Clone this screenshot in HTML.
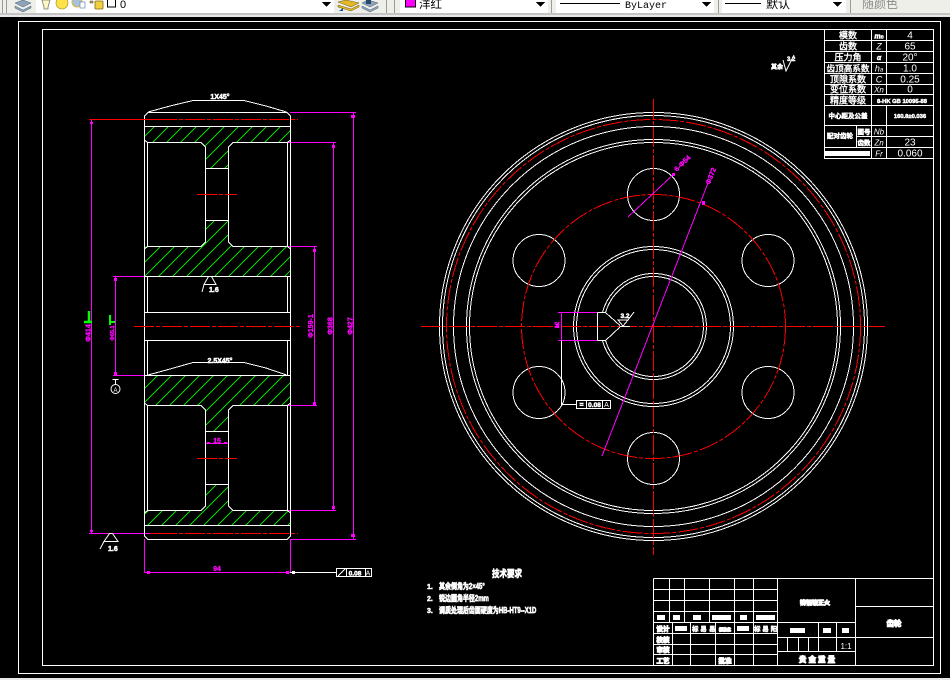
<!DOCTYPE html>
<html><head><meta charset="utf-8"><style>
html,body{margin:0;padding:0;background:#000;width:950px;height:680px;overflow:hidden}
svg{display:block}
text{font-family:"Liberation Sans","Noto Sans CJK SC",sans-serif;fill:#fff}
.w{fill:none;stroke:#fff;stroke-width:1}
.m{fill:none;stroke:#f0f;stroke-width:1}
.r{fill:none;stroke:#f00;stroke-width:1}
.d{stroke-dasharray:20 2 4 2}
.b{stroke:#fff;stroke-width:.5;font-weight:bold}
.bb{stroke:#fff;stroke-width:1;font-weight:bold}
.mt{fill:#f0f;stroke:#f0f;stroke-width:.3;font-size:7px;font-weight:bold}
.c{text-anchor:middle}
.tb{font-size:9px;stroke:#fff;stroke-width:.4}
</style></head><body>
<svg width="950" height="680" viewBox="0 0 950 680" xmlns="http://www.w3.org/2000/svg">
<rect width="950" height="680" fill="#000"/>
<!-- toolbar -->
<rect width="950" height="13" fill="#efefea"/>
<rect y="13" width="950" height="2" fill="#c4c4c4"/>
<rect y="15" width="950" height="2" fill="#e8e8e8"/>
<rect y="678" width="950" height="2" fill="#e8e8e8"/>
<g shape-rendering="crispEdges">
<path d="M2.500 0V13M6.500 0V13M386.500 0V13M394.500 0V13M551.500 0V13M718.500 0V13M850.500 0V13" stroke="#9a9a9a" fill="none"/>
<rect x="36" y="0" width="298" height="13" fill="#fff"/>
<rect x="400" y="0" width="148" height="13" fill="#fff"/>
<rect x="556" y="0" width="158" height="13" fill="#fff"/>
<rect x="722" y="0" width="124" height="13" fill="#fff"/>
<rect x="405.500" y="-1" width="10" height="8" fill="#f0f" stroke="#000"/>
<rect x="107.500" y="-1" width="8" height="8" fill="#fff" stroke="#000"/>
<path d="M560 3.500H620M725 3.500H761" stroke="#000"/>
<path d="M322 2h9l-4.500 5zM536 2h9l-4.500 5zM702 2h9l-4.500 5zM833 2h9l-4.500 5z" fill="#000"/>
</g>
<!-- toolbar icons -->
<path d="M15 3l8-3 8 3-8 4zM15 6l8 4 8-4v2l-8 4-8-4z" fill="#8fa3b8" stroke="#4d6178" stroke-width=".5"/>
<path d="M42 0h8l-2 7v2h-4v-2z" fill="#fff8c0" stroke="#777" stroke-width=".8"/>
<circle cx="62" cy="3" r="6" fill="#ffe24a" stroke="#9a8a20" stroke-width=".6"/>
<circle cx="77" cy="2" r="5" fill="#a8c0d8" stroke="#d8b840" stroke-width="1"/>
<rect x="80" y="2" width="5" height="6" fill="#fff" stroke="#6b8ab0" stroke-width=".7"/>
<rect x="95" y="1" width="8" height="8" rx="1" fill="#f0d040" stroke="#7d6a10" stroke-width=".8"/>
<path d="M90 1h3v2h-3z" fill="#d8b840" stroke="#333" stroke-width=".5"/>
<path d="M338 2l8-2 13 3-8 4zM338 5l13 4 8-4v2l-8 4-13-4z" fill="#e3b92a" stroke="#6a5a10" stroke-width=".5"/>
<path d="M339 11l4-3v3z" fill="#234a9c"/>
<path d="M362 3l6-3 10 3-8 4zM362 6l8 4 8-4v2l-8 4-8-4z" fill="#8fa3b8" stroke="#4d6178" stroke-width=".5"/>
<rect x="366" y="0" width="5" height="4" fill="#234a6c"/>
<text x="120" y="8" font-size="11" style="fill:#000">0</text>
<text x="419" y="8" font-size="11.500" style="fill:#000">洋红</text>
<text x="625" y="8" font-size="10" style="fill:#000;font-family:'Liberation Mono',monospace">ByLayer</text>
<text x="766" y="8" font-size="12" style="fill:#000">默认</text>
<text x="862" y="8" font-size="12" style="fill:#8c8c8c">随颜色</text>

<g shape-rendering="crispEdges">
<!-- frames -->
<rect x="18.500" y="21.500" width="922" height="652" class="w"/>
<rect x="42.500" y="29.500" width="891" height="636" class="w"/>

<!-- parameter table -->
<path class="w" d="M824.500 29.500V158.500H933.500M824.500 40.500H933.500M824.500 51.500H933.500M824.500 62.500H933.500M824.500 73.500H933.500M824.500 84.500H933.500M824.500 94.500H933.500M824.500 105.500H933.500M824.500 125.500H933.500M856.500 136.500H933.500M824.500 147.500H933.500M871.500 29.500V158.500M886.500 29.500V94.500M886.500 105.500V158.500M856.500 125.500V147.500"/>
<rect x="825" y="151" width="45" height="5" fill="#fff"/>

<!-- title block -->
<path class="w" d="M653.500 578.500H933.500M653.500 578.500V665.500M777.500 578.500V665.500M855.500 578.500V665.500M855.500 606.500H933.500M855.500 637.500H933.500M777.500 622.500H855.500M777.500 637.500H855.500M777.500 651.500H855.500M818.500 622.500V651.500M836.500 622.500V651.500M787.500 637.500V651.500M798.500 637.500V651.500M808.500 637.500V651.500M653.500 589.500H777.500M653.500 600.500H777.500M653.500 611.500H777.500M653.500 622.500H777.500M653.500 633.500H777.500M653.500 644.500H777.500M653.500 654.500H777.500M669.500 578.500V622.500M684.500 578.500V622.500M709.500 578.500V622.500M734.500 578.500V665.500M753.500 578.500V665.500M672.500 622.500V665.500M690.500 622.500V665.500M715.500 622.500V665.500"/>
<path fill="#fff" d="M657 615h8v5h-8zM673 615h7v5h-7zM693 615h8v5h-8zM712 615h19v5h-19zM740 615h7v5h-7zM756 615h19v5h-19zM675 626h12v5h-12zM737 626h12v5h-12zM790 628h15v5h-15zM823 628h8v5h-8zM842 628h7v5h-7z"/>

<!-- left view: hatch -->
<clipPath id="h"><path d="M144.500 126.500H290.500V142.500H233L228.500 147V168.500H205.500V147L201 142.500H144.500ZM144.500 276.500H290.500V246.500H233L228.500 242V220.500H205.500V242L201 246.500H144.500ZM144.500 375.500H290.500V405.500H233L228.500 410V431.500H205.500V410L201 405.500H144.500ZM144.500 525.500H290.500V510.500H233L228.500 506V484.500H205.500V506L201 510.500H144.500Z"/></clipPath>
<path clip-path="url(#h)" shape-rendering="auto" fill="none" stroke="#0f0" stroke-width=".9" d="M100 167l200-200M100 181l200-200M100 195l200-200M100 209l200-200M100 223l200-200M100 237l200-200M100 251l200-200M100 265l200-200M100 279l200-200M100 293l200-200M100 307l200-200M100 321l200-200M100 335l200-200M100 349l200-200M100 363l200-200M100 377l200-200M100 391l200-200M100 405l200-200M100 419l200-200M100 433l200-200M100 447l200-200M100 461l200-200M100 475l200-200M100 489l200-200M100 503l200-200M100 517l200-200M100 531l200-200M100 545l200-200M100 559l200-200M100 573l200-200M100 587l200-200M100 601l200-200M100 615l200-200M100 629l200-200M100 643l200-200M100 657l200-200M100 671l200-200M100 685l200-200M100 699l200-200M100 713l200-200"/>

<!-- left view: magenta dims -->
<path class="m" d="M290 112.500H356M353.500 112.500V539.500M290 539.500H356M287 142.500H336M333.500 142.500V510.500M287 510.500H336M287 246.500H317M314.500 246.500V405.500M287 405.500H317M89 533.500H150M91.500 119.500V533.500M113 276.500H144M115.500 276.500V375.500M113 375.500H144M144.500 539V572.500M290.500 539V572.500M144.500 572.500H290.500M205.500 443.500H228.500M205.500 443.500V458M228.500 443.500V458"/>
<path fill="#f0f" d="M351 115h4v3h-4zM332 145h3v3h-3zM313 249h3v3h-3zM90 122h3v2h-3zM114 278h3v3h-3zM351 534h4v3h-4zM332 506h3v3h-3zM313 402h3v3h-3zM90 530h3v2h-3zM114 372h3v3h-3zM147 571h3v3h-3zM286 571h3v3h-3zM207 442h3v2h-3zM224 442h3v2h-3z"/>

<!-- left view: white -->
<path class="w" d="M148 112.500L144.500 116V536L148 539.500H287L290.500 536V116L287 112.500ZM148 112L170 106L193 100.500H244L266 106L286.500 112M144.500 126.500H290.500M144.500 276.500H290.500M144.500 312.500H290.500M144.500 340.500H290.500M144.500 375.500H290.500M144.500 525.500H290.500M147.500 276.500V312.500M287.500 276.500V312.500M147.500 340.500V375.500M287.500 340.500V375.500M148 375L170 369L193 362.500H244L266 368L286.500 375M205.500 168.500H228.500M205.500 220.500H228.500M205.500 431.500H228.500M205.500 484.500H228.500"/>
<path class="w" d="M201 142.500H147.500V246.500H201L205.500 242V147ZM233 142.500H287.500V246.500H233L228.500 242V147ZM201 405.500H147.500V510.500H201L205.500 506V410ZM233 405.500H287.500V510.500H233L228.500 506V410Z"/>
<path class="w" d="M144.500 140L147.500 142.500M290.500 140L287.500 142.500M144.500 249L147.500 246.500M290.500 249L287.500 246.500M144.500 403L147.500 405.500M290.500 403L287.500 405.500M144.500 513L147.500 510.500M290.500 513L287.500 510.500"/>
<!-- left red -->
<path class="r" d="M89 119.500H157M150 533.500H157"/>
<path class="r d" d="M157 119.500H298M134 326.500H300M157 533.500H298M197 194.500H237M197 458.500H237"/>

<!-- leaders -->
<path class="w" d="M290 572.500H336.500M336.500 568.500H371.500V576.500H336.500ZM346.500 568.500V576.500M365.500 568.500V576.500M338 576L345 569"/>
<rect x="292" y="571" width="3" height="3" fill="#fff"/>
<path class="w" d="M112.500 379.500H118.500M115.500 379.500V385"/>
</g>

<!-- right view -->
<g fill="none">
<g stroke="#fff" shape-rendering="crispEdges">
<circle cx="653.500" cy="326.500" r="214"/>
<circle cx="653.500" cy="326.500" r="211"/>
<circle cx="653.500" cy="326.500" r="200"/>
<circle cx="653.500" cy="326.500" r="187"/>
<circle cx="653.500" cy="326.500" r="184"/>
<circle cx="653.500" cy="326.500" r="80"/>
<circle cx="653.500" cy="326.500" r="77"/>
<path d="M602.400 312.500A53 53 0 1 1 602.400 340.500M605.500 312.500A50 50 0 1 1 605.500 340.500"/>
<circle cx="653.500" cy="194.500" r="26"/>
<circle cx="653.500" cy="458.500" r="26"/>
<circle cx="539" cy="260.500" r="26"/>
<circle cx="768" cy="260.500" r="26"/>
<circle cx="539" cy="392.500" r="26"/>
<circle cx="768" cy="392.500" r="26"/>
</g>
<g stroke="#f00" shape-rendering="crispEdges">
<circle cx="653.500" cy="326.500" r="207" stroke-dasharray="20 2 4 2"/>
<circle cx="653.500" cy="326.500" r="132" stroke-dasharray="20 2 4 2"/>
<path class="d" d="M421 326.500H885M653.500 99V555"/>
</g>
</g>
<g shape-rendering="crispEdges">
<path class="m" d="M558 312.500H597.500M558 340.500H597.500M561.500 312.500V340.500"/>
<path class="w" d="M597.500 312.500V340.500M597.500 312.500H605.500L620 325.500M597.500 340.500H605.500L620 327M620 326.500H630M561.500 340.500V404.500H576.500M576.500 400.500H610.500V408.500H576.500ZM586.500 400.500V408.500M602.500 400.500V408.500M618 320H628L623 326ZM628 320L634 312"/>
<path stroke="#f0f" fill="none" d="M628 217L675 173M602 456L708 183"/>
<path fill="#f0f" d="M702 201h3v4h-3zM672 173h3v3h-3zM556 324h3v4h-3z"/>
</g>
<circle cx="115.500" cy="389" r="4.500" fill="none" stroke="#fff"/>

<!-- roughness symbols -->
<path class="w" d="M204 284.500H216L211.500 276.500H208.500ZM204 284.500L202 292M104 541.500H118L112.500 533.500H109.500ZM104 541.500L100 549"/>
<path class="w" d="M783 60L786 71L794 55"/>

<!-- left view text -->
<text x="220" y="99" class="c b" font-size="7">1X45°</text>
<text x="220" y="363" class="c b" font-size="7">2.5X45°</text>
<text x="209" y="292" class="b" font-size="7">1.6</text>
<text x="108" y="551" class="b" font-size="7">1.6</text>
<text x="217" y="443" class="c mt">15</text>
<text x="217" y="571" class="c mt">94</text>
<text x="115.500" y="392" class="c" font-size="6">A</text>
<text transform="translate(313 326) rotate(-90)" class="c mt" font-size="6">Φ159-1</text>
<text transform="translate(332.500 326) rotate(-90)" class="c mt">Φ368</text>
<text transform="translate(352.500 326) rotate(-90)" class="c mt">Φ427</text>
<text transform="translate(90.500 333) rotate(-90)" class="c mt">Φ414</text>
<text transform="translate(114 333) rotate(-90)" class="c mt" style="font-size:5.500px">Φ65.1</text>
<path stroke="#0f0" stroke-width="2.500" fill="none" d="M89 311V321M84 322H92"/>
<path stroke="#0f0" stroke-width="2" fill="none" d="M110 315V325M110 322H115"/>

<!-- right view text -->
<text transform="translate(684 165) rotate(-44)" class="c mt">6-Φ54</text>
<text transform="translate(713 177) rotate(-68)" class="c mt">Φ372</text>
<text transform="translate(559 325) rotate(-90)" class="c mt" style="font-size:6px">12</text>
<text x="625" y="318" class="c b" font-size="6.500">3.2</text>
<text x="581.500" y="407" class="c b" font-size="7">=</text>
<text x="594.500" y="407" class="c b" font-size="6.500">0.08</text>
<text x="606.500" y="407" class="c" font-size="7">A</text>
<text x="355" y="575.500" class="c b" font-size="6.500">0.08</text>
<text x="368" y="575.500" class="c" font-size="7">A</text>
<text x="787" y="61" class="b" font-size="6">3.2</text>
<text x="771" y="69" class="b" font-size="6">其余</text>

<!-- table text -->
<g>
<text x="848" y="38.500" class="c tb">模数</text>
<text x="848" y="49.500" class="c tb">齿数</text>
<text x="848" y="60.500" class="c tb">压力角</text>
<text x="848" y="71.500" class="c tb" style="font-size:8.600px">齿顶高系数</text>
<text x="848" y="82.500" class="c tb">顶隙系数</text>
<text x="848" y="92.500" class="c tb">变位系数</text>
<text x="848" y="103.500" class="c tb">精度等级</text>
<text x="848" y="118" class="c b" font-size="6.500">中心距及公差</text>
<text x="840" y="138" class="c b" font-size="6.500">配对齿轮</text>
<text x="864" y="134" class="c b" font-size="6.500">图号</text>
<text x="864" y="145" class="c b" font-size="6.500">齿数</text>
<g style="font-style:italic">
<text x="879" y="38.500" class="c b" font-size="7">m<tspan font-size="5">n</tspan></text>
<text x="879" y="49.500" class="c" font-size="9">Z</text>
<text x="879" y="60" class="c b" font-size="7">α</text>
<text x="879" y="71.500" class="c" font-size="9">h<tspan font-size="6">a</tspan></text>
<text x="879" y="82.500" class="c" font-size="9">C</text>
<text x="879" y="92.500" class="c" font-size="8">Xn</text>
<text x="879" y="134.500" class="c" font-size="8">Nb</text>
<text x="879" y="145.500" class="c" font-size="8">Zn</text>
<text x="879" y="156.500" class="c" font-size="8">Fr</text>
</g>
<text x="910" y="38.500" class="c" font-size="10">4</text>
<text x="910" y="49.500" class="c" font-size="10">65</text>
<text x="910" y="60.500" class="c" font-size="10">20°</text>
<text x="910" y="71.500" class="c" font-size="10">1.0</text>
<text x="910" y="82.500" class="c" font-size="10">0.25</text>
<text x="910" y="92.500" class="c" font-size="10">0</text>
<text x="902" y="103" class="c b" font-size="5.800">8-HK GB 10095-88</text>
<text x="910" y="118" class="c b" font-size="5.800">160.8±0.036</text>
<text x="910" y="145.500" class="c" font-size="10">23</text>
<text x="910" y="156.500" class="c" font-size="10">0.060</text>
</g>

<!-- title block text -->
<text x="815" y="605" class="c bb" font-size="6">铸钢锻正火</text>
<text x="894" y="626" class="c bb" font-size="7.500">齿轮</text>
<text x="817" y="662" class="c bb" font-size="7.500">贵 金 重 量</text>
<text x="846" y="649" class="c" font-size="8">1:1</text>
<text x="663" y="631" class="c bb" font-size="6.500">设计</text>
<text x="663" y="642" class="c bb" font-size="6.500">校核</text>
<text x="663" y="652" class="c bb" font-size="6.500">审核</text>
<text x="663" y="663" class="c bb" font-size="6.500">工艺</text>
<text x="725" y="663" class="c bb" font-size="6.500">批准</text>
<text x="692" y="631" class="b" font-size="6.500">标 易</text>
<text x="709" y="631" class="b" font-size="6.500">易</text>
<text x="719" y="631" class="bb" font-size="4">标准化</text>
<text x="754" y="631" class="b" font-size="6.500">标 易 阳</text>

<!-- tech requirements -->
<text transform="translate(507 577) scale(1 1.300)" class="c b" font-size="7.500">技术要求</text>
<text x="427" y="589" class="b" font-size="7">1.</text>
<text transform="translate(439 589) scale(1 1.300)" class="b" font-size="6">其余倒角为2×45°</text>
<text x="427" y="601" class="b" font-size="7">2.</text>
<text transform="translate(439 601) scale(1 1.300)" class="b" font-size="6">锐边圆角半径2mm</text>
<text x="427" y="613" class="b" font-size="7">3.</text>
<text transform="translate(439 613) scale(1 1.300)" class="b" font-size="6">调质处理后齿面硬度为HB-HT9--X1D</text>
</svg>
</body></html>
